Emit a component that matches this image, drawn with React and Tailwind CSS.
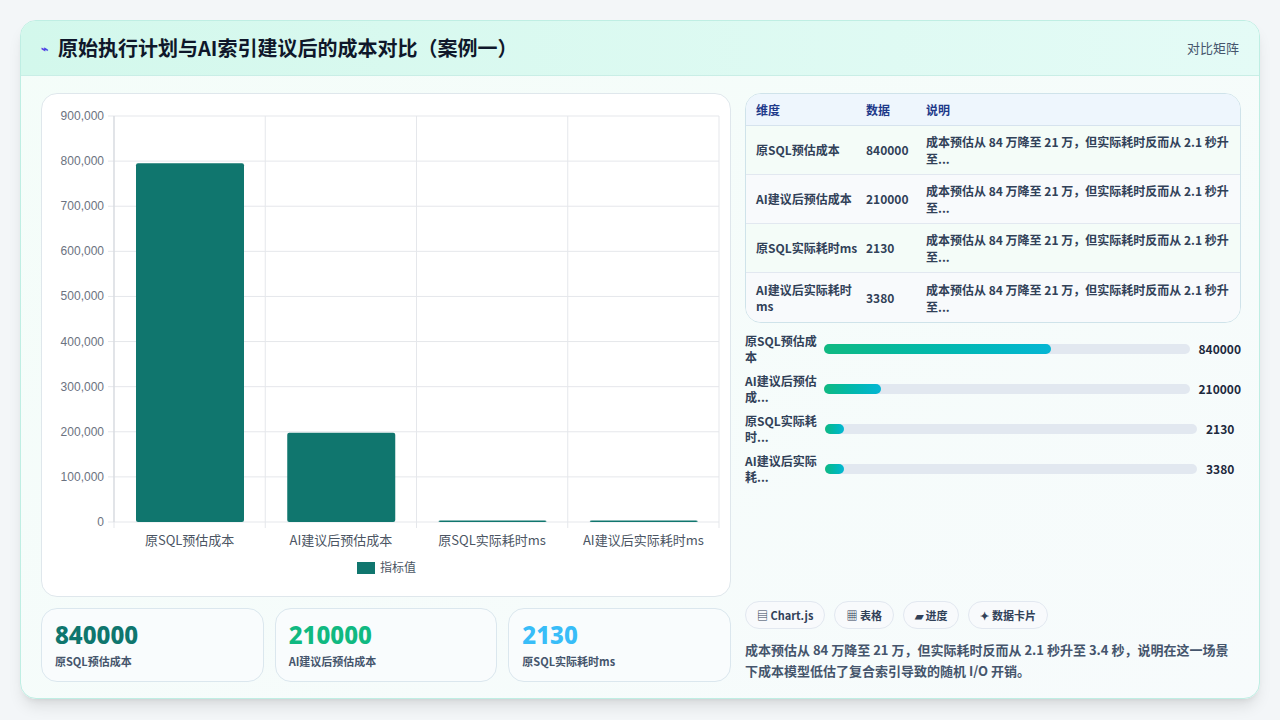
import React from "react";

const F = { fontFamily: '"Noto Sans CJK SC", "Noto Sans", sans-serif' };

function Chart() {
  const ticks = [900000, 800000, 700000, 600000, 500000, 400000, 300000, 200000, 100000, 0];
  const x0 = 72, x1 = 677, top = 22, bot = 428;
  const h = bot - top;
  const data = [795000, 198000, 2130, 3380];
  const labels = ["原SQL预估成本", "AI建议后预估成本", "原SQL实际耗时ms", "AI建议后实际耗时ms"];
  const cw = (x1 - x0) / 4;
  return (
    <svg width="690" height="503" style={F}>
      {ticks.map((t, i) => {
        const y = top + (h * i) / 9;
        return (
          <g key={t}>
            <line x1={x0 - 6} x2={x1} y1={y} y2={y} stroke="#e5e7eb" />
            <text x={x0 - 10} y={y + 4} fontSize="12" fill="#6b7280" textAnchor="end" fontFamily="Liberation Sans, sans-serif">
              {t.toLocaleString("en-US")}
            </text>
          </g>
        );
      })}
      {[0, 1, 2, 3, 4].map((i) => (
        <line key={i} x1={x0 + cw * i} x2={x0 + cw * i} y1={top} y2={bot + 6} stroke="#e5e7eb" />
      ))}
      <line x1={x0} x2={x0} y1={top} y2={bot} stroke="#d1d5db" />
      {data.map((v, i) => {
        const bh = Math.max(1.5, (v / 900000) * h);
        return <rect key={i} x={x0 + cw * i + 22} y={bot - bh} width={108} height={bh} rx="2" fill="#10766e" />;
      })}
      {labels.map((l, i) => (
        <text key={l} x={x0 + cw * i + cw / 2} y={451} fontSize="13" fill="#4b5563" textAnchor="middle">{l}</text>
      ))}
      <rect x="315" y="468" width="18" height="12" fill="#10766e" />
      <text x="338" y="478" fontSize="12" fill="#4b5563">指标值</text>
    </svg>
  );
}

const rows = [
  ["原SQL预估成本", "840000"],
  ["AI建议后预估成本", "210000"],
  ["原SQL实际耗时ms", "2130"],
  ["AI建议后实际耗时ms", "3380"],
];
const bars = [
  ["原SQL预估成本", "840000", 62],
  ["AI建议后预估成...", "210000", 15.6],
  ["原SQL实际耗时...", "2130", 5],
  ["AI建议后实际耗...", "3380", 5],
];

export default function App() {
  return (
    <div className="w-[1280px] h-[720px] bg-[#f3f6f8] p-5" style={F}>
      <div className="h-[679px] rounded-2xl border border-[#bfeee3] bg-gradient-to-br from-[#f4fdf9] to-[#f7fbfc] shadow-lg overflow-hidden flex flex-col">
        <div className="h-[55px] flex items-center justify-between px-5 bg-gradient-to-r from-[#d3f8ec] to-[#e4fbf6] border-b border-[#c9eee6]">
          <div className="flex items-center gap-[10px]">
            <span className="text-[12px] text-[#4f46e5] font-bold">⌁</span>
            <span className="text-[20px] font-bold text-[#0f172a]">原始执行计划与AI索引建议后的成本对比（案例一）</span>
          </div>
          <span className="text-[13px] text-slate-600">对比矩阵</span>
        </div>
        <div className="flex gap-[14px] px-5 pt-[17px]">
          <div className="w-[690px] flex flex-col gap-[11px]">
            <div className="h-[504px] rounded-2xl border border-[#dfe7ec] bg-white">
              <Chart />
            </div>
            <div className="flex gap-[11px]">
              {[["840000", "text-[#0f766e]", "原SQL预估成本"], ["210000", "text-[#10b981]", "AI建议后预估成本"], ["2130", "text-[#38bdf8]", "原SQL实际耗时ms"]].map(([n, c, l]) => (
                <div key={l} className="flex-1 h-[74px] rounded-2xl border border-[#dbe7ee] bg-[#f9fcfd] px-[13px] pt-[11px]">
                  <div className={`text-[24px] font-extrabold leading-[30px] ${c}`} style={{ fontFamily: '"Noto Sans", sans-serif' }}>{n}</div>
                  <div className="text-[11px] font-bold text-slate-600 mt-[3px]">{l}</div>
                </div>
              ))}
            </div>
          </div>
          <div className="w-[496px] flex flex-col">
            <div className="rounded-2xl border border-[#cfe3ea] overflow-hidden bg-white">
              <div className="h-[32px] flex items-center bg-[#eef6fd] border-b border-[#d6e3ee] text-[12px] font-bold text-[#1e3a8a]">
                <div className="w-[120px] pl-[10px]">维度</div>
                <div className="w-[60px]">数据</div>
                <div className="flex-1">说明</div>
              </div>
              {rows.map(([a, b], i) => (
                <div key={a} className={`h-[49px] flex items-center text-[12px] font-bold text-slate-700 ${i < 3 ? "border-b border-[#e2e8f0]" : ""} ${i % 2 === 0 ? "bg-[#f4fcf8]" : "bg-[#f8fafc]"}`}>
                  <div className="w-[120px] pl-[10px] pr-2 leading-[16px]">{a}</div>
                  <div className="w-[60px]">{b}</div>
                  <div className="flex-1 pr-[10px] leading-[17px]">成本预估从 84 万降至 21 万，但实际耗时反而从 2.1 秒升至...</div>
                </div>
              ))}
            </div>
            <div className="flex flex-col gap-[12px] mt-[12px]">
              {bars.map(([l, v, p]) => (
                <div key={l} className="flex items-center h-[28px]">
                  <div className="w-[80px] text-[12px] font-bold text-slate-700 leading-[16px] pr-[6px]">{l}</div>
                  <div className="w-[372px] h-[10px] rounded-full bg-[#e2e8f0]">
                    <div className="h-full rounded-full bg-gradient-to-r from-[#10b981] to-[#06b6d4]" style={{ width: p + "%" }} />
                  </div>
                  <div className="ml-[9px] text-[12px] font-bold text-slate-800">{v}</div>
                </div>
              ))}
            </div>
            <div className="flex gap-[9px] mt-[118px]">
              {["▤ Chart.js", "▦ 表格", "▰ 进度", "✦ 数据卡片"].map((c) => (
                <span key={c} className="h-[28px] px-[11px] flex items-center rounded-full border border-[#e2e8f0] bg-[#f8fafc] text-[11px] font-bold text-slate-700">{c}</span>
              ))}
            </div>
            <p className="mt-[10px] text-[13px] font-bold text-slate-600 leading-[21px] pr-2">
              成本预估从 84 万降至 21 万，但实际耗时反而从 2.1 秒升至 3.4 秒，说明在这一场景下成本模型低估了复合索引导致的随机 I/O 开销。
            </p>
          </div>
        </div>
      </div>
    </div>
  );
}
